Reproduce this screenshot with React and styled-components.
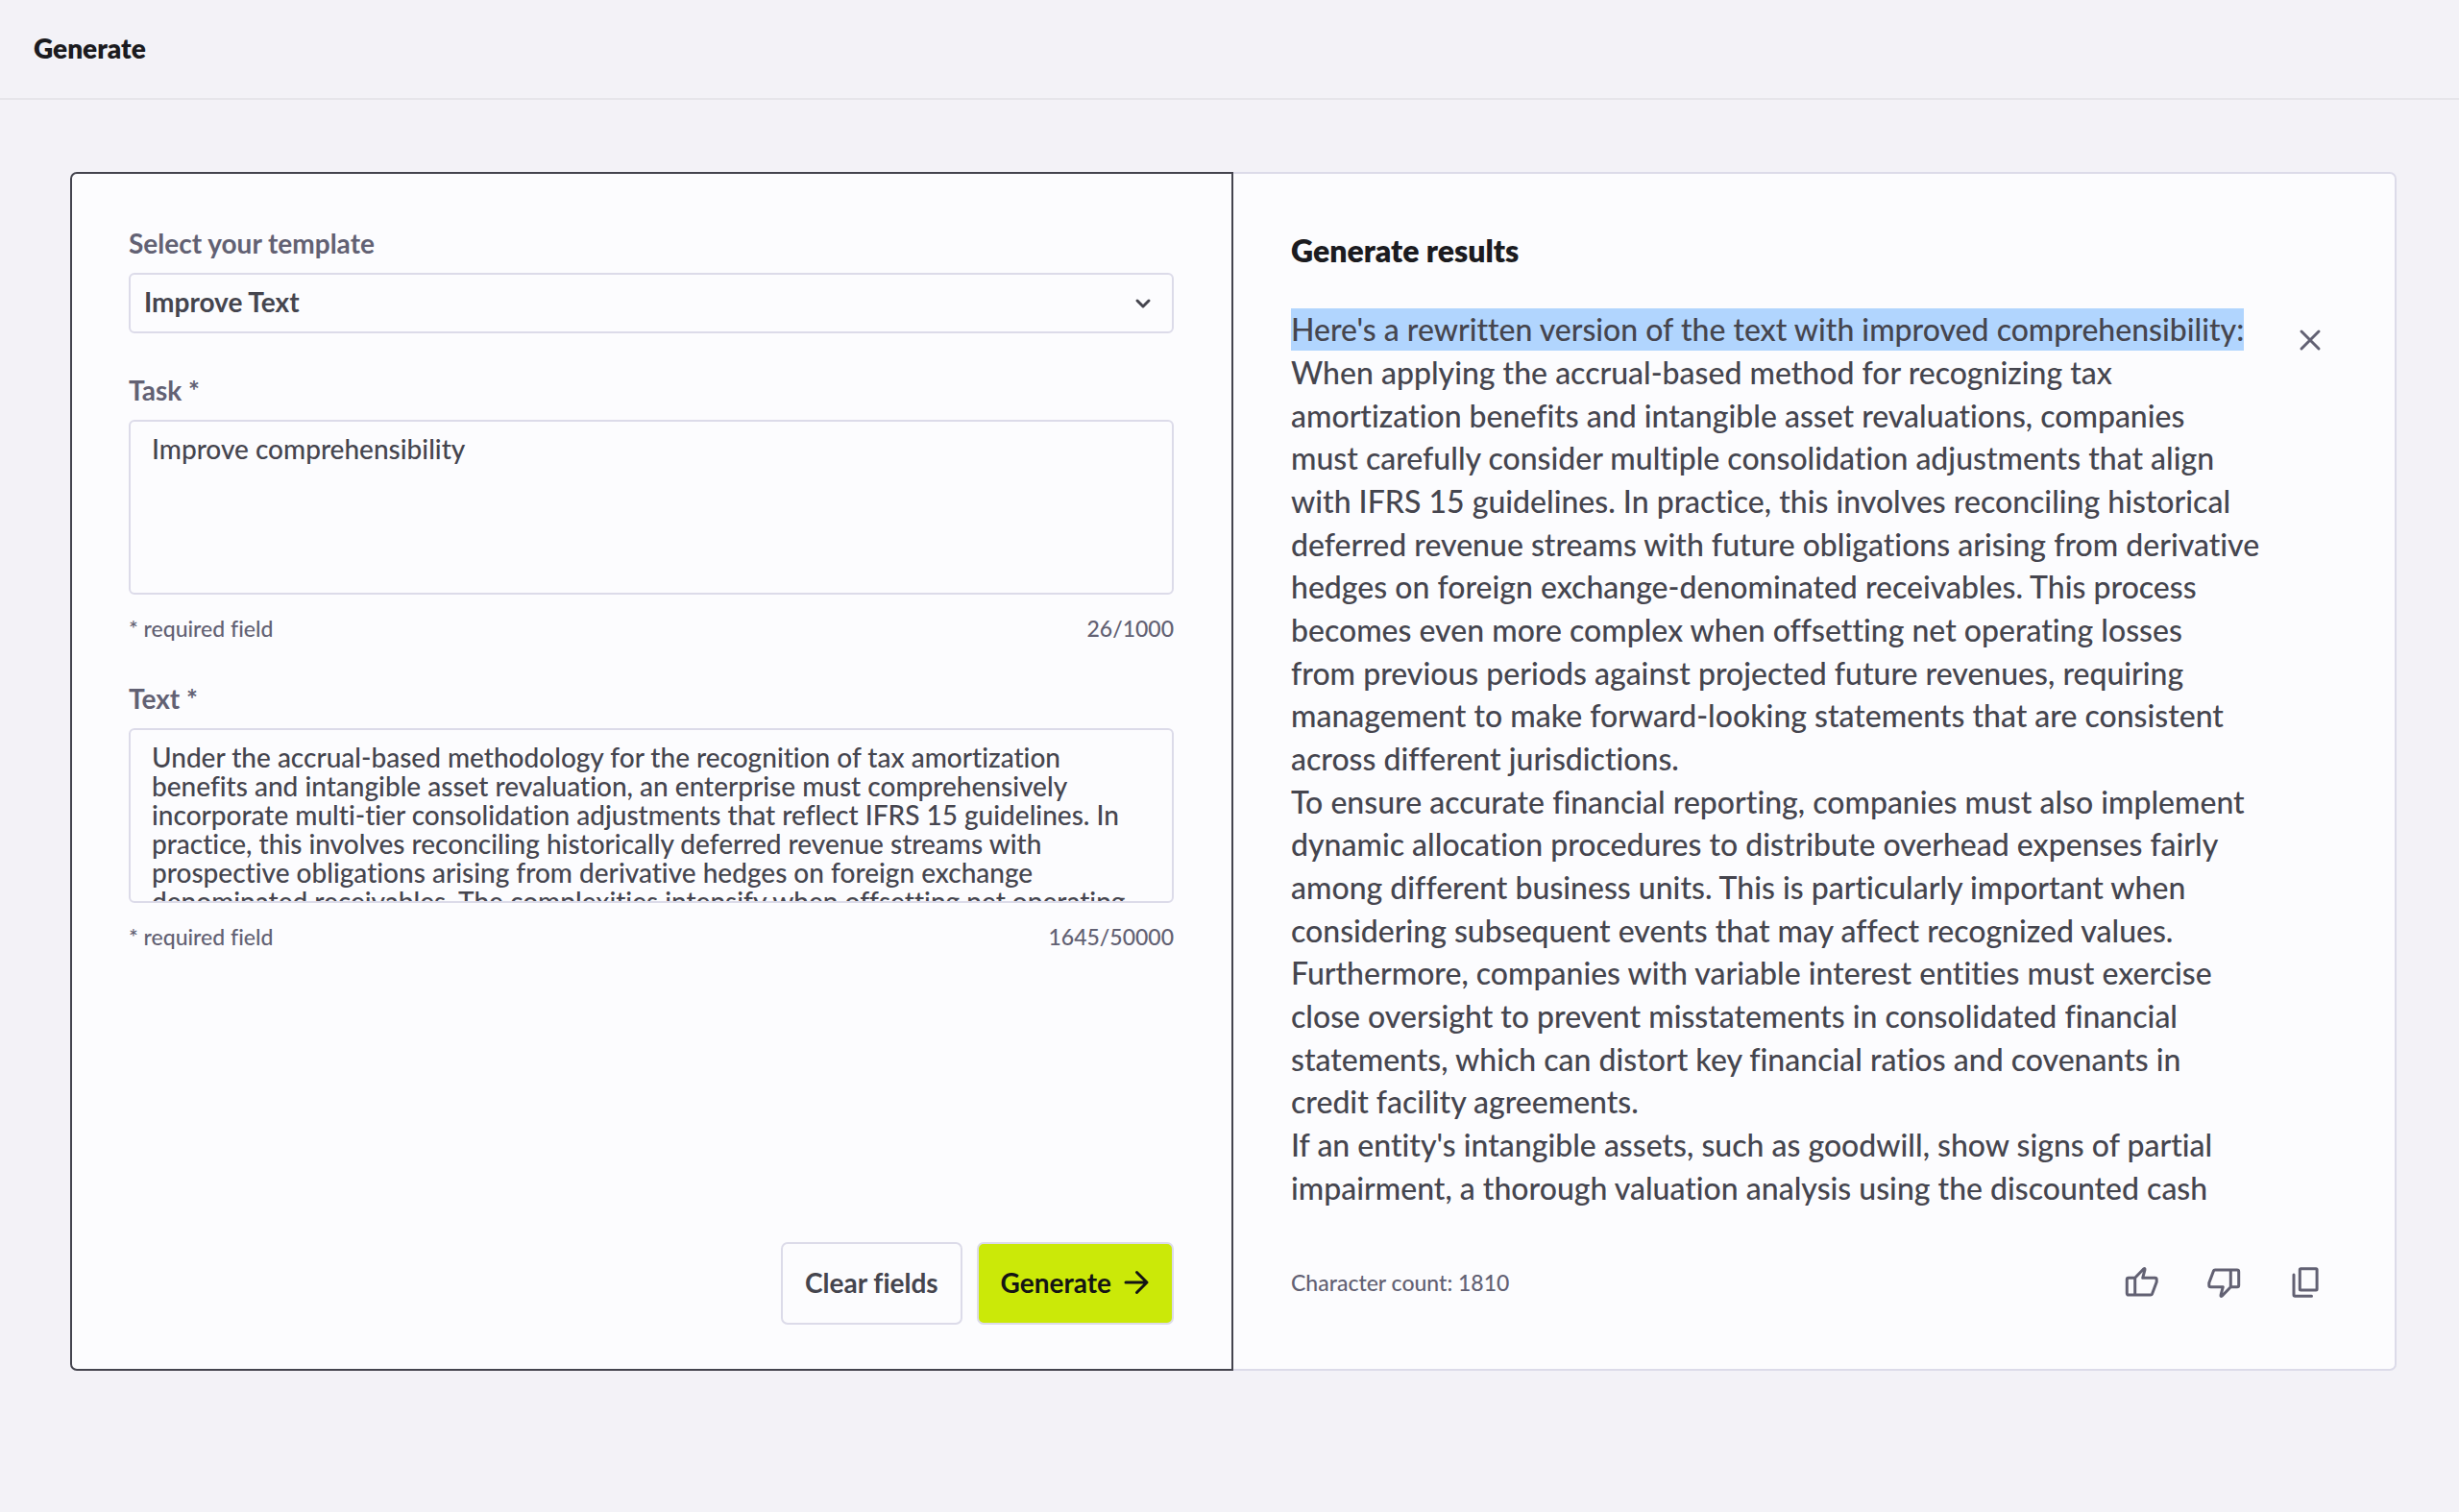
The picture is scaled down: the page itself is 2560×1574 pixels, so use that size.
import React from 'react';
import styled, { createGlobalStyle } from 'styled-components';

const GlobalStyle = createGlobalStyle`
    * {
        box-sizing: border-box;
    }

    body {
        margin: 0;
        background: #f3f2f7;
        color: #45454e;
        font-family: Lato, sans-serif;
        font-weight: 500;
        font-variant-ligatures: no-common-ligatures;
    }

    button, select, textarea {
        font-family: inherit;
        font-variant-ligatures: inherit;
        color: inherit;
    }
`;

const Header = styled.header`
    display: flex;
    align-items: center;
    height: 104px;
    padding: 0 35px 3px;
    border-bottom: 2px solid #e6e5ea;
`;

const PageTitle = styled.h1`
    margin: 0;
    color: #1b1b20;
    font-size: 28px;
    font-weight: 800;
    line-height: 32px;
`;

const Main = styled.main`
    padding: 75px 65px 64px 73px;
`;

const Card = styled.div`
    display: grid;
    grid-template-columns: 1fr 1fr;
`;

const Panel = styled.section`
    display: flex;
    flex-direction: column;
    padding: 58px 60px 57px;
    background: #fcfcfe;
    border: 2px solid #dcdbe9;
    border-left: 0;
    border-radius: 0 7px 7px 0;
`;

const FormPanel = styled(Panel).attrs({ as: 'form' })`
    padding: 56px 60px 46px 59px;
    border: 2px solid #44444e;
    border-radius: 7px 0 0 7px;
`;

const Field = styled.div`
    display: flex;
    flex-direction: column;
    margin-bottom: ${props => props.$gap || '0px'};
`;

const Label = styled.label`
    margin-bottom: 15px;
    color: #626173;
    font-size: 28px;
    font-weight: 700;
    line-height: 32px;
`;

const SelectBox = styled.div`
    display: grid;
    align-items: center;

    & > * {
        grid-area: 1 / 1;
    }

    & > svg {
        justify-self: end;
        margin-right: 20px;
        pointer-events: none;
    }
`;

const Select = styled.select`
    width: 100%;
    height: 63px;
    padding: 0 14px 4px;
    appearance: none;
    background: transparent;
    border: 2px solid #dcdbe9;
    border-radius: 6px;
    font-size: 28px;
    font-weight: 700;
`;

const TextArea = styled.textarea`
    display: block;
    width: 100%;
    height: 182px;
    padding: 13px 22px;
    background: transparent;
    border: 2px solid #dcdbe9;
    border-radius: 6px;
    font-size: 28px;
    font-weight: 500;
    line-height: 30px;
    white-space: pre;
    overflow: hidden;
    resize: none;
`;

const FieldNote = styled.div`
    display: flex;
    justify-content: space-between;
    margin-top: 19px;
    color: #626173;
    font-size: 23px;
    line-height: 32px;
`;

const Actions = styled.div`
    display: flex;
    justify-content: flex-end;
    gap: 15px;
    margin-top: auto;
`;

const Button = styled.button`
    display: flex;
    align-items: center;
    gap: 12px;
    height: 86px;
    padding: 0 23px 2px;
    background: ${props => (props.$primary ? '#cbe908' : 'transparent')};
    color: ${props => (props.$primary ? '#141414' : '#45454e')};
    border: 2px solid #dcdbe9;
    border-radius: 7px;
    font-size: 28px;
    font-weight: 700;
`;

const ResultTitle = styled.h2`
    margin: 0 0 38px;
    color: #1b1b20;
    font-size: 32px;
    font-weight: 800;
    line-height: 44px;
`;

const ResultBody = styled.div`
    display: flex;
    justify-content: space-between;
    align-items: flex-start;
`;

const ResultText = styled.div`
    display: grid;
    grid-auto-rows: 1fr;
    justify-items: start;
    align-items: center;
    height: 938px;
    font-size: 32px;
    line-height: 44px;
    white-space: nowrap;
`;

const Selected = styled.mark`
    background: #b1d5fe;
    color: inherit;
`;

const IconButton = styled.button`
    display: flex;
    align-items: center;
    justify-content: center;
    width: ${props => props.$width || '66px'};
    height: 66px;
    padding: 0;
    background: none;
    border: 0;
    color: #626173;
`;

const ResultFooter = styled.footer`
    display: flex;
    align-items: center;
    justify-content: space-between;
    margin-top: 43px;
    color: #626173;
    font-size: 23px;
    line-height: 32px;
`;

const IconRow = styled.div`
    display: flex;
    gap: 19px;
`;

const Icon = ({ size = 36, children }) => (
    <svg
        width={size}
        height={size}
        viewBox={`0 0 ${size} ${size}`}
        fill="none"
        stroke="currentColor"
        strokeWidth="3"
        strokeLinecap="round"
        strokeLinejoin="round"
        aria-hidden="true"
    >
        {children}
    </svg>
);

const thumb = 'M10.7 13.3 L19.6 4 Q21.5 2.8 20.9 5 L18.7 13.3 H31.5 Q33.2 13.3 33.2 15 V17.4 L28.6 29.8 Q28.1 31 27 31 H4 Q2.3 31 2.3 29.3 V15 Q2.3 13.3 4 13.3 Z M10.7 13.3 V31';

const inputText = [
    'Under the accrual-based methodology for the recognition of tax amortization',
    'benefits and intangible asset revaluation, an enterprise must comprehensively',
    'incorporate multi-tier consolidation adjustments that reflect IFRS 15 guidelines. In',
    'practice, this involves reconciling historically deferred revenue streams with',
    'prospective obligations arising from derivative hedges on foreign exchange',
    'denominated receivables. The complexities intensify when offsetting net operating',
].join('\n');

const resultLines = [
    'When applying the accrual-based method for recognizing tax',
    'amortization benefits and intangible asset revaluations, companies',
    'must carefully consider multiple consolidation adjustments that align',
    'with IFRS 15 guidelines. In practice, this involves reconciling historical',
    'deferred revenue streams with future obligations arising from derivative',
    'hedges on foreign exchange-denominated receivables. This process',
    'becomes even more complex when offsetting net operating losses',
    'from previous periods against projected future revenues, requiring',
    'management to make forward-looking statements that are consistent',
    'across different jurisdictions.',
    'To ensure accurate financial reporting, companies must also implement',
    'dynamic allocation procedures to distribute overhead expenses fairly',
    'among different business units. This is particularly important when',
    'considering subsequent events that may affect recognized values.',
    'Furthermore, companies with variable interest entities must exercise',
    'close oversight to prevent misstatements in consolidated financial',
    'statements, which can distort key financial ratios and covenants in',
    'credit facility agreements.',
    "If an entity's intangible assets, such as goodwill, show signs of partial",
    'impairment, a thorough valuation analysis using the discounted cash',
];

const TextField = ({ id, label, value, count, gap }) => (
    <Field $gap={gap}>
        <Label htmlFor={id}>{label} *</Label>
        <TextArea id={id} defaultValue={value} spellCheck={false} />
        <FieldNote>
            <span>* required field</span>
            <span>{count}</span>
        </FieldNote>
    </Field>
);

const App = () => (
    <>
        <GlobalStyle />
        <Header>
            <PageTitle>Generate</PageTitle>
        </Header>
        <Main>
            <Card>
                <FormPanel>
                    <Field $gap="43px">
                        <Label htmlFor="template">Select your template</Label>
                        <SelectBox>
                            <Select id="template">
                                <option>Improve Text</option>
                            </Select>
                            <Icon size={24}>
                                <path d="M6 9 L12 15 L18 9" />
                            </Icon>
                        </SelectBox>
                    </Field>
                    <TextField id="task" label="Task" value="Improve comprehensibility" count="26/1000" gap="41px" />
                    <TextField id="text" label="Text" value={inputText} count="1645/50000" />
                    <Actions>
                        <Button type="button">Clear fields</Button>
                        <Button type="button" $primary>
                            Generate
                            <Icon size={28}>
                                <path d="M3 14 H25 M14.5 3.5 L25 14 L14.5 24.5" />
                            </Icon>
                        </Button>
                    </Actions>
                </FormPanel>
                <Panel>
                    <ResultTitle>Generate results</ResultTitle>
                    <ResultBody>
                        <ResultText>
                            <Selected>Here's a rewritten version of the text with improved comprehensibility:</Selected>
                            {resultLines.map(line => (
                                <span key={line}>{line}</span>
                            ))}
                        </ResultText>
                        <IconButton type="button" $width="57px" aria-label="Close">
                            <Icon size={24}>
                                <path d="M3 3 L21 21 M21 3 L3 21" />
                            </Icon>
                        </IconButton>
                    </ResultBody>
                    <ResultFooter>
                        <span>Character count: 1810</span>
                        <IconRow>
                            <IconButton type="button" aria-label="Like">
                                <Icon>
                                    <path d={thumb} />
                                </Icon>
                            </IconButton>
                            <IconButton type="button" aria-label="Dislike">
                                <Icon>
                                    <path d={thumb} transform="rotate(180 18 18)" />
                                </Icon>
                            </IconButton>
                            <IconButton type="button" aria-label="Copy">
                                <Icon>
                                    <rect x="12.3" y="3.7" width="17.8" height="22.4" rx="1" />
                                    <path d="M6 10 V31 Q6 32.3 7.3 32.3 H24.5" />
                                </Icon>
                            </IconButton>
                        </IconRow>
                    </ResultFooter>
                </Panel>
            </Card>
        </Main>
    </>
);

export default App;
